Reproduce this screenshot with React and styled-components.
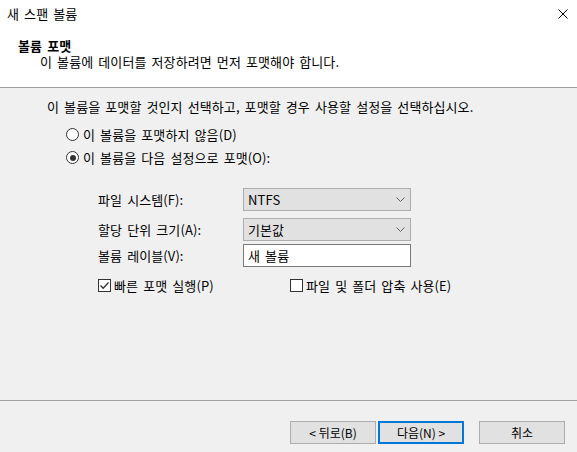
import styled, { createGlobalStyle } from 'styled-components';

const GlobalStyle = createGlobalStyle`
	html, body {
		margin: 0;
		padding: 0;
	}
	body {
		font-family: "Noto Sans CJK KR", "Noto Sans", sans-serif;
		font-size: 13px;
		word-spacing: 2px;
		letter-spacing: 0.1px;
		color: #000;
		background: #f0f0f0;
	}
`;

export default function App() {
	return (
		<>
			<GlobalStyle />
			<Dialog>
				<Header>
					<TitleBar>
						<span>새 스팬 볼륨</span>
						<CloseIcon viewBox="0 0 10 10">
							<path d="M0.5 0.5 L9.5 9.5 M9.5 0.5 L0.5 9.5" stroke="#000" strokeWidth="1" />
						</CloseIcon>
					</TitleBar>
					<Heading>볼륨 포맷</Heading>
					<SubHeading>이 볼륨에 데이터를 저장하려면 먼저 포맷해야 합니다.</SubHeading>
				</Header>

				<Body>
					<Intro>이 볼륨을 포맷할 것인지 선택하고, 포맷할 경우 사용할 설정을 선택하십시오.</Intro>
					<RadioRow top={8}>
						<Radio />
						<span>이 볼륨을 포맷하지 않음(D)</span>
					</RadioRow>
					<RadioRow>
						<Radio checked />
						<span>이 볼륨을 다음 설정으로 포맷(O):</span>
					</RadioRow>

					<Fields>
						<FieldRow top={19}>
							<Label>파일 시스템(F):</Label>
							<Combo>
								<span>NTFS</span>
								<Chevron />
							</Combo>
						</FieldRow>
						<FieldRow top={7}>
							<Label>할당 단위 크기(A):</Label>
							<Combo>
								<span>기본값</span>
								<Chevron />
							</Combo>
						</FieldRow>
						<FieldRow top={3}>
							<Label>볼륨 레이블(V):</Label>
							<TextBox>새 볼륨</TextBox>
						</FieldRow>
					</Fields>

					<CheckRow>
						<CheckItem width={192}>
							<Check checked />
							<span>빠른 포맷 실행(P)</span>
						</CheckItem>
						<CheckItem>
							<Check />
							<span>파일 및 폴더 압축 사용(E)</span>
						</CheckItem>
					</CheckRow>
				</Body>

				<Footer>
					<Button>&lt; 뒤로(B)</Button>
					<Button primary>다음(N) &gt;</Button>
					<Button gap={15}>취소</Button>
				</Footer>
			</Dialog>
		</>
	);
}

function Chevron() {
	return (
		<ChevronIcon viewBox="0 0 9 5">
			<path d="M0.5 0.5 L4.5 4.5 L8.5 0.5" fill="none" stroke="#606060" strokeWidth="1" />
		</ChevronIcon>
	);
}

function Check({ checked }) {
	return (
		<CheckBox>
			{checked && (
				<svg width="11" height="11" viewBox="0 0 11 11">
					<path d="M1.5 5.5 L4.2 8.2 L9.5 2.5" fill="none" stroke="#333" strokeWidth="1.3" />
				</svg>
			)}
		</CheckBox>
	);
}

const Dialog = styled.div`
	width: 577px;
	height: 452px;
	display: flex;
	flex-direction: column;
	overflow: hidden;
`;

const Header = styled.div`
	background: #fff;
	border-bottom: 1px solid #a0a0a0;
	box-sizing: border-box;
	height: 88px;
`;

const TitleBar = styled.div`
	height: 27px;
	display: flex;
	align-items: center;
	justify-content: space-between;
	padding: 0 9px 0 7px;
	line-height: 16px;
`;

const CloseIcon = styled.svg`
	width: 10px;
	height: 10px;
	margin-top: 1px;
`;

const Heading = styled.div`
	margin: 11px 0 0 18px;
	font-weight: bold;
	line-height: 16px;
`;

const SubHeading = styled.div`
	margin-left: 40px;
	line-height: 16px;
`;

const Body = styled.div`
	flex: 1;
	padding: 11px 0 0 47px;
`;

const Intro = styled.div`
	line-height: 16px;
`;

const RadioRow = styled.div`
	display: flex;
	align-items: center;
	height: 23px;
	margin: ${p => p.top || 0}px 0 0 19px;
	gap: 4px;
`;

const Radio = styled.span`
	width: 11px;
	height: 11px;
	border: 1px solid #333;
	border-radius: 50%;
	background: #fff;
	display: flex;
	align-items: center;
	justify-content: center;
	&::after {
		content: '';
		display: ${p => (p.checked ? 'block' : 'none')};
		width: 6px;
		height: 6px;
		border-radius: 50%;
		background: #333;
	}
`;

const Fields = styled.div`
	padding-left: 51px;
`;

const FieldRow = styled.div`
	display: flex;
	align-items: center;
	margin-top: ${p => p.top}px;
	height: 23px;
`;

const Label = styled.div`
	width: 145px;
`;

const Combo = styled.div`
	width: 168px;
	height: 23px;
	box-sizing: border-box;
	border: 1px solid #adadad;
	background: #e1e1e1;
	display: flex;
	align-items: center;
	justify-content: space-between;
	padding: 0 5px 0 4px;
`;

const ChevronIcon = styled.svg`
	width: 9px;
	height: 5px;
`;

const TextBox = styled.div`
	width: 168px;
	height: 23px;
	box-sizing: border-box;
	border: 1px solid #7a7a7a;
	background: #fff;
	display: flex;
	align-items: center;
	padding-left: 4px;
`;

const CheckRow = styled.div`
	display: flex;
	margin: 8px 0 0 51px;
	height: 20px;
	align-items: center;
`;

const CheckItem = styled.div`
	display: flex;
	align-items: center;
	gap: 3px;
	width: ${p => (p.width ? `${p.width}px` : 'auto')};
`;

const CheckBox = styled.span`
	width: 11px;
	height: 11px;
	border: 1px solid #333;
	background: #fff;
	display: flex;
	align-items: center;
	justify-content: center;
`;

const Footer = styled.div`
	height: 52px;
	box-sizing: border-box;
	border-top: 1px solid #a0a0a0;
	display: flex;
	justify-content: flex-end;
	align-items: flex-start;
	padding: 20px 12px 0 0;
	gap: 2px;
`;

const Button = styled.button`
	width: 86px;
	height: 23px;
	margin-left: ${p => (p.gap ? `${p.gap - 2}px` : '0')};
	box-sizing: border-box;
	border: ${p => (p.primary ? '2px solid #0078d7' : '1px solid #adadad')};
	background: #e1e1e1;
	font-family: inherit;
	font-size: 12px;
	letter-spacing: 0;
	word-spacing: 0;
	color: #000;
	padding: 0;
`;
